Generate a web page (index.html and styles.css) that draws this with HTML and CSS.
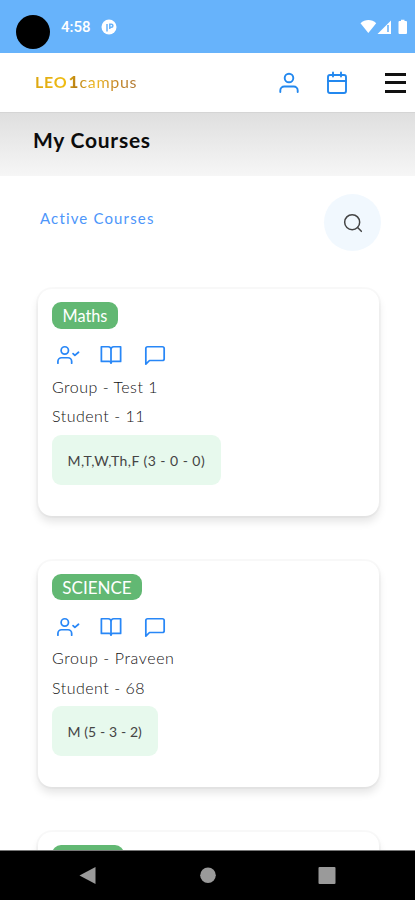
FILE: index.html
```
<!DOCTYPE html>
<html lang="en">
<head>
<meta charset="utf-8">
<meta name="viewport" content="width=device-width, initial-scale=1">
<title>My Courses</title>
<link rel="stylesheet" href="styles.css">
</head>
<body>
<svg width="0" height="0" class="defs">
  <symbol id="user-check" viewBox="0 0 24 24"><circle cx="8.5" cy="7" r="4"/><path d="M16 21v-2a4 4 0 0 0-4-4H5a4 4 0 0 0-4 4v2M17.500 10.500l2 2 4-3.500"/></symbol>
  <symbol id="book" viewBox="0 0 24 24"><path d="M1.500 3H9a3 3 0 0 1 3 3v15a2 2 0 0 0-2-2H1.500zM22.500 3H15a3 3 0 0 0-3 3v15a2 2 0 0 1 2-2h8.500z"/></symbol>
  <symbol id="message" viewBox="0 0 24 24"><path d="M22 16a2 2 0 0 1-2 2H6l-4 4V5a2 2 0 0 1 2-2h16a2 2 0 0 1 2 2z"/></symbol>
</svg>
<div class="phone">
  <div class="status">
    <span class="camera"></span>
    <span class="time">4:58</span>
    <svg class="app" viewBox="0 0 16 16"><circle cx="8" cy="8" r="7.5" fill="#fff"/><path d="M6 12.500V5M8.800 10V5.200h1.600a1.500 1.500 0 0 1 0 3H8.800" fill="none" stroke="#67b3fb" stroke-width="1.5"/></svg>
    <svg class="signals" viewBox="0 0 48 16"><path d="M.5 4.200C5-.1 12-.1 16.200 4.200L8.300 14z" fill="#fff"/><path d="M17.500 15L31 1.500V15z" fill="#fff"/><path d="M28 6v7" stroke="#67b3fb" stroke-width="1.600"/><path d="M38.500 3q0-1 1-1h1.500V.800h3.500V2H46q1 0 1 1v11q0 1-1 1h-6.500q-1 0-1-1z" fill="#fff"/></svg>
  </div>
  <header class="header">
    <div class="logo"><b class="leo">LEO</b><b class="one">1</b><span class="campus">campus</span></div>
    <svg class="hicon" viewBox="0 0 24 24"><circle cx="12" cy="7" r="4.300"/><path d="M3.300 21v-1.500a4 4 0 0 1 4-4h9.400a4 4 0 0 1 4 4V21"/></svg>
    <svg class="hicon cal" viewBox="0 0 24 24"><rect x="3" y="4" width="18" height="18" rx="2"/><path d="M16 1.500v4M8 1.500v4M3 10h18"/></svg>
    <div class="burger"><i></i><i></i><i></i></div>
  </header>
  <div class="band"><h1>My Courses</h1></div>
  <main>
    <div class="toolbar">
      <span class="tab">Active Courses</span>
      <span class="search"><svg viewBox="0 0 24 24"><circle cx="11" cy="11" r="9"/><path d="M17.500 17.500L22 22"/></svg></span>
    </div>
    <section class="card">
      <div class="badge maths">Maths</div>
      <div class="icons"><svg class="check"><use href="#user-check"/></svg><svg><use href="#book"/></svg><svg><use href="#message"/></svg></div>
      <p class="g1">Group - Test 1</p>
      <p class="s1">Student - 11</p>
      <div class="days d1">M,T,W,Th,F (3 - 0 - 0)</div>
    </section>
    <section class="card">
      <div class="badge science">SCIENCE</div>
      <div class="icons"><svg class="check"><use href="#user-check"/></svg><svg><use href="#book"/></svg><svg><use href="#message"/></svg></div>
      <p class="g2">Group - Praveen</p>
      <p class="s2">Student - 68</p>
      <div class="days d2">M (5 - 3 - 2)</div>
    </section>
    <section class="card"><div class="badge third"></div></section>
  </main>
  <nav class="nav">
    <svg viewBox="0 0 415 50"><path d="M79.500 25.500L95.500 17v17z"/><circle cx="208" cy="25.300" r="7.800"/><rect x="318.500" y="17" width="17" height="17" rx="1"/></svg>
  </nav>
</div>
</body>
</html>
```

FILE: styles.css
```
* { box-sizing: border-box; margin: 0; padding: 0; }
body { background: #fff; font-family: Lato, "Open Sans", sans-serif; color: #444; }
.defs { display: block; height: 0; }
.phone { width: 415px; height: 900px; overflow: hidden; display: flex; flex-direction: column; }
.status { height: 53px; flex: none; background: #67b3fb; display: flex; align-items: flex-start; }
.camera { width: 34px; height: 34px; border-radius: 50%; background: #000; margin: 15px 0 0 16px; }
.time { width: 30px; margin: 17px 0 0 11px; font: 500 15px/20px Roboto, sans-serif; color: #fff; white-space: nowrap; }
.app { width: 16px; height: 16px; margin: 19px 0 0 10px; }
.signals { width: 48px; height: 16px; margin: 19px 7px 0 auto; }
.header { height: 60px; flex: none; background: #fff; border-bottom: 1px solid #d5d5d5; display: flex; align-items: center; padding: 0 9px 0 35px; }
.logo { width: 104px; display: flex; align-items: baseline; white-space: nowrap; line-height: 22px; margin-top: -2px; background: linear-gradient(100deg, #dba511 0%, #f0bd13 30%, #b57b12 40%, #f0bb25 58%, #c98b24 75%, #aa7436 100%); -webkit-background-clip: text; background-clip: text; color: transparent; }
.leo { font-size: 16px; font-weight: 700; letter-spacing: .8px; }
.one { font-size: 17px; font-weight: 900; margin: 0 1px 0 1px; }
.campus { font-size: 16px; letter-spacing: .7px; }
.hicon { width: 24px; height: 24px; margin-left: 138px; fill: none; stroke: #2388ef; stroke-width: 1.900; stroke-linecap: round; stroke-linejoin: round; }
.cal { margin-left: 24px; }
.burger { width: 21px; height: 20px; margin-left: auto; display: flex; flex-direction: column; justify-content: space-between; }
.burger i { height: 3px; background: #111; }
.band { height: 63px; flex: none; background: linear-gradient(#dfdfdf, #f6f6f6); padding: 14px 0 0 33px; }
h1 { font-size: 21px; line-height: 26px; font-weight: 700; color: #0c0c0c; letter-spacing: .75px; white-space: nowrap; }
main { flex: 1; min-height: 0; overflow: hidden; padding: 18px 36px 0 38px; }
.toolbar { height: 95px; display: flex; align-items: flex-start; justify-content: space-between; }
.tab { color: #4d96fa; font-size: 15px; line-height: 20px; letter-spacing: 1.150px; margin: 14px 0 0 2px; white-space: nowrap; }
.search { width: 57px; height: 57px; margin-right: -2px; border-radius: 50%; background: #f1f8fe; display: flex; align-items: center; justify-content: center; }
.search svg { width: 20px; height: 20px; fill: none; stroke: #444; stroke-width: 1.800; stroke-linecap: round; }
.card { height: 226.500px; margin-bottom: 45px; border-radius: 14px; background: #fff; padding: 13px 14px 0; box-shadow: 0 0 0 2px rgba(0,0,0,.022), 0 6px 8px rgba(0,0,0,.1); }
.badge { width: 66px; height: 26.500px; border-radius: 9px; background: #62b873; color: #fff; font-size: 16.300px; line-height: 27px; text-align: center; white-space: nowrap; }
.science { width: 90px; font-size: 17px; }
.third { width: 72px; }
.icons { height: 22px; margin: 15.500px 0 5.500px 4px; display: flex; gap: 22px; }
.icons svg { width: 22px; height: 22px; fill: none; stroke: #2887f7; stroke-width: 1.900; stroke-linecap: round; stroke-linejoin: round; }
.icons .check { width: 24px; margin-right: -2px; }
.card p { font-size: 16px; line-height: 29.500px; height: 29.500px; white-space: nowrap; color: #111; font-weight: 300; letter-spacing: .5px; }
.card .g2 { letter-spacing: .6px; }
.days { width: 169px; height: 50px; margin-top: 4px; border-radius: 9px; background: #e7f9ed; padding-left: 15.500px; color: #444; font-size: 14px; line-height: 51px; white-space: nowrap; letter-spacing: .45px; }
.d2 { width: 106px; letter-spacing: .1px; }
.nav { height: 50px; flex: none; background: #000; border-top: 1px solid #777; }
.nav svg { display: block; width: 415px; height: 50px; margin-top: -1px; fill: #9a9a9a; }
```
